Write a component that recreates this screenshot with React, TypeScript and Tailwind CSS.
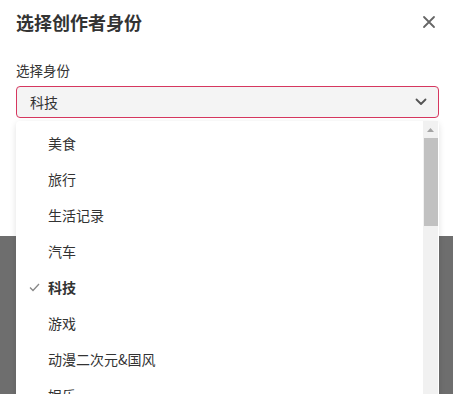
import React from "react";

const options = ["美食", "旅行", "生活记录", "汽车", "科技", "游戏", "动漫二次元&国风", "娱乐"];

export default function App() {
  return (
    <div
      className="relative w-[453px] h-[394px] overflow-hidden bg-white text-[#333]"
      style={{ fontFamily: '"Noto Sans CJK SC", "Noto Sans", sans-serif' }}
    >
      <div className="h-[236px] bg-white px-4">
        <div className="flex items-center justify-between pt-[0px] h-[44px]">
          <div className="text-[18px] font-bold leading-[24px] text-[#333]">选择创作者身份</div>
          <svg width="14" height="14" viewBox="0 0 14 14" className="mr-[1px]">
            <path d="M2 2 L12 12 M12 2 L2 12" stroke="#666" strokeWidth="1.8" strokeLinecap="round" />
          </svg>
        </div>
        <div className="mt-[17px] text-[13.5px] leading-[18px] text-[#333]">选择身份</div>
        <div className="mt-[7px] h-[32px] w-[423px] rounded-[4px] border border-[#d6375f] bg-[#f4f4f4] flex items-center justify-between pl-[13px] pr-[11px]">
          <span className="text-[14px] text-[#333]">科技</span>
          <svg width="12" height="8" viewBox="0 0 12 8">
            <path d="M1.5 1.5 L6 6 L10.5 1.5" fill="none" stroke="#555" strokeWidth="1.8" strokeLinecap="round" strokeLinejoin="round" />
          </svg>
        </div>
      </div>
      <div className="h-[158px] bg-[#6e6e6e]" />

      <div className="absolute left-[16px] top-[121px] w-[423px] h-[300px] rounded-[4px] bg-white shadow-[0_2px_6px_rgba(0,0,0,0.12)] flex">
        <div className="flex-1 pt-[4px]">
          {options.map((o) => (
            <div key={o} className="h-[36px] flex items-center">
              <div className="w-[32px] flex justify-end pr-[8px]">
                {o === "科技" && (
                  <svg width="11" height="9" viewBox="0 0 11 9">
                    <path d="M1 4.5 L4 7.5 L10 1" fill="none" stroke="#888" strokeWidth="1.3" />
                  </svg>
                )}
              </div>
              <span className={"text-[14px] text-[#333] " + (o === "科技" ? "font-bold" : "")}>{o}</span>
            </div>
          ))}
        </div>
        <div className="w-[15px] mr-[1px] bg-[#f1f1f1] flex flex-col items-center">
          <svg width="7" height="4" viewBox="0 0 7 4" className="mt-[7px]">
            <path d="M0 4 L3.5 0 L7 4 Z" fill="#a3a3a3" />
          </svg>
          <div className="mt-[6px] w-[14px] h-[88px] bg-[#c1c1c1]" />
        </div>
      </div>
    </div>
  );
}
